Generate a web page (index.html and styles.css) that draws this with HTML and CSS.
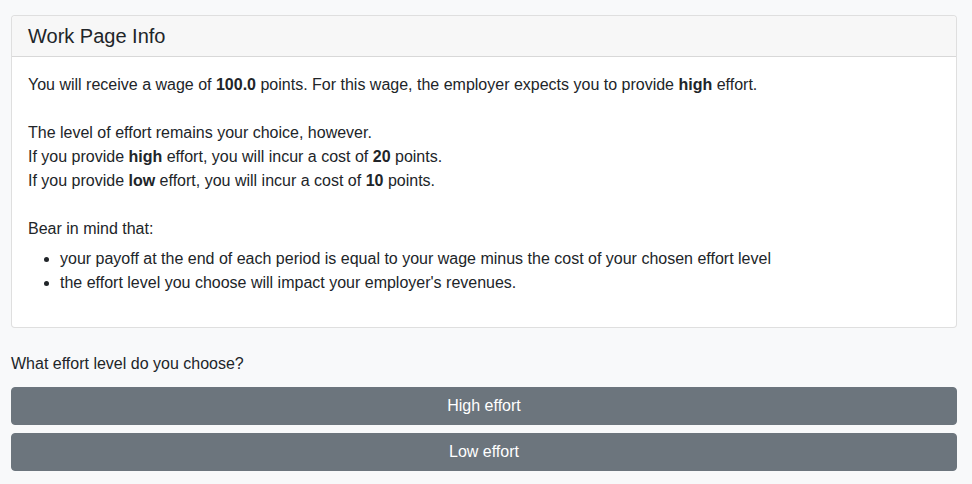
FILE: index.html
```html
<!DOCTYPE html>
<html>
<head>
<meta charset="utf-8">
<link rel="stylesheet" href="styles.css">
</head>
<body>
<div class="page">
  <div class="card">
    <div class="card-header">Work Page Info</div>
    <div class="card-body">
      <p>You will receive a wage of <b>100.0</b> points. For this wage, the employer expects you to provide <b>high</b> effort.</p>
      <p>The level of effort remains your choice, however.<br>
      If you provide <b>high</b> effort, you will incur a cost of <b>20</b> points.<br>
      If you provide <b>low</b> effort, you will incur a cost of <b>10</b> points.</p>
      <p class="lead-in">Bear in mind that:</p>
      <ul>
        <li>your payoff at the end of each period is equal to your wage minus the cost of your chosen effort level</li>
        <li>the effort level you choose will impact your employer's revenues.</li>
      </ul>
    </div>
  </div>
  <p class="question">What effort level do you choose?</p>
  <div class="buttons">
    <button class="btn">High effort</button>
    <button class="btn">Low effort</button>
  </div>
</div>
</body>
</html>
```

FILE: styles.css
```css
html, body {
  margin: 0;
  padding: 0;
  background: #f8f9fa;
}
body {
  font-family: "Liberation Sans", Arial, sans-serif;
  font-size: 16px;
  line-height: 24px;
  color: #212529;
}
.page {
  padding: 15px 15px 0 11px;
}
.card {
  background: #fff;
  border: 1px solid rgba(0,0,0,0.125);
  border-radius: 4px;
}
.card-header {
  background: #f7f7f7;
  border-bottom: 1px solid rgba(0,0,0,0.125);
  padding: 8px 16px;
  font-size: 20px;
  line-height: 24px;
  border-radius: 4px 4px 0 0;
}
.card-body {
  padding: 16px;
}
.card-body p {
  margin: 0 0 24px;
}
.card-body p.lead-in {
  margin-bottom: 6px;
}
.card-body ul {
  margin: 0 0 16px;
  padding-left: 32px;
}
.question {
  margin: 24px 0 11px;
}
.buttons {
  display: flex;
  flex-direction: column;
  gap: 8px;
}
.btn {
  background: #6c757d;
  color: #fff;
  border: 1px solid #6c757d;
  border-radius: 4px;
  font-family: inherit;
  font-size: 16px;
  line-height: 24px;
  padding: 6px 12px;
  width: 100%;
}
```
